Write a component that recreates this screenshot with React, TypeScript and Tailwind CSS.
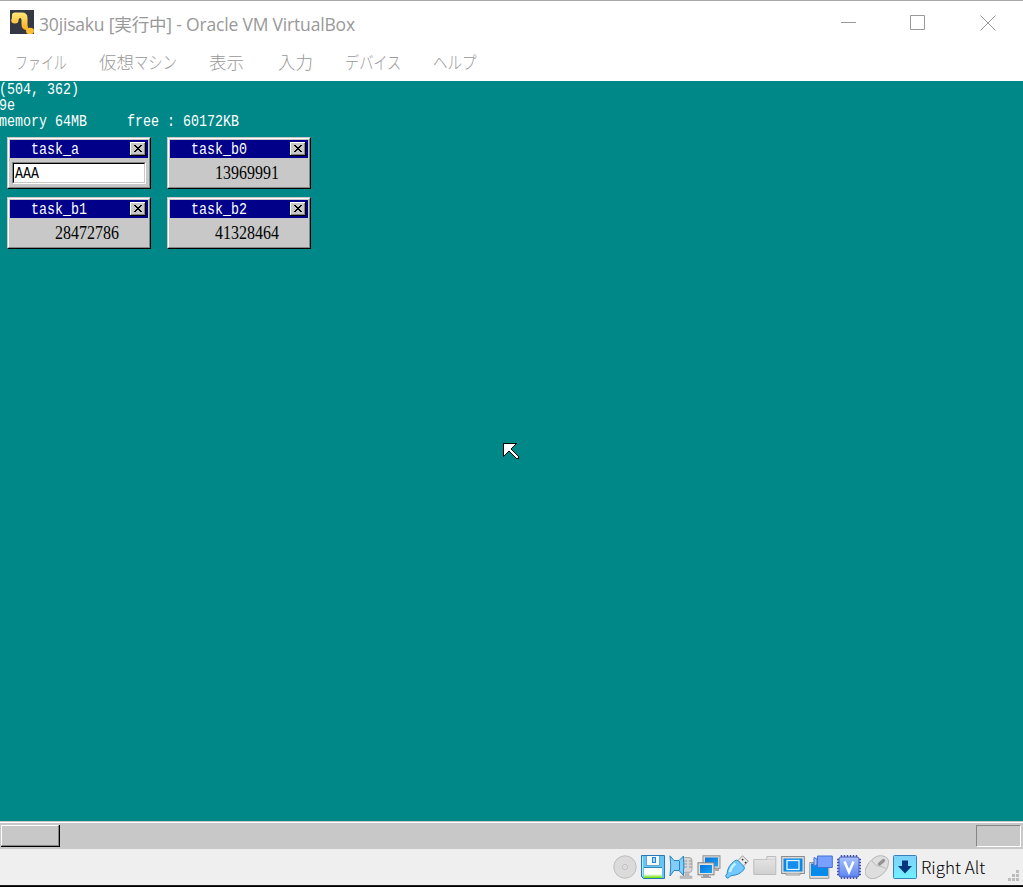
import type { ReactNode } from "react";

const CURSOR = [
  "**************..",
  "*OOOOOOOOOOO*...",
  "*OOOOOOOOOO*....",
  "*OOOOOOOOO*.....",
  "*OOOOOOOO*......",
  "*OOOOOOO*.......",
  "*OOOOOOO*.......",
  "*OOOOOOOO*......",
  "*OOOO**OOO*.....",
  "*OOO*..*OOO*....",
  "*OO*....*OOO*...",
  "*O*......*OOO*..",
  "**........*OOO*.",
  "*..........*OOO*",
  "............*OO*",
  ".............***",
];

const CLOSE = [
  "OOOOOOOOOOOOOOO*",
  "OQQQQQQQQQQQQQ$*",
  "OQQQQQQQQQQQQQ$*",
  "OQQQ**QQQQ**QQ$*",
  "OQQQQ**QQ**QQQ$*",
  "OQQQQQ****QQQQ$*",
  "OQQQQQQ**QQQQQ$*",
  "OQQQQQ****QQQQ$*",
  "OQQQQ**QQ**QQQ$*",
  "OQQQ**QQQQ**QQ$*",
  "OQQQQQQQQQQQQQ$*",
  "OQQQQQQQQQQQQQ$*",
  "O$$$$$$$$$$$$$$*",
  "****************",
];

const PALETTE: Record<string, string> = {
  "*": "#000000",
  O: "#ffffff",
  Q: "#c8c8c8",
  $: "#868686",
};

function Sprite({ rows }: { rows: string[] }) {
  return (
    <svg width={rows[0].length} height={rows.length} shapeRendering="crispEdges" className="block">
      {rows.flatMap((row, y) =>
        [...row].map((c, x) =>
          c === "." ? null : <rect key={`${x}-${y}`} x={x} y={y} width="1" height="1" fill={PALETTE[c]} />,
        ),
      )}
    </svg>
  );
}

/* Console text: 8x16 character cells */
function Cells({ children }: { children: ReactNode }) {
  return (
    <span className="block h-4 translate-y-px scale-y-[1.3] whitespace-pre font-['Liberation_Mono',monospace] text-[13.33px] leading-4">
      {children}
    </span>
  );
}

function TaskWindow({ title, place, children }: { title: string; place: string; children: ReactNode }) {
  return (
    <section className={`absolute h-[52px] w-36 border border-t-[#c8c8c8] border-r-black border-b-black border-l-[#c8c8c8] ${place}`}>
      <div className="h-full border border-t-white border-r-[#868686] border-b-[#868686] border-l-white bg-[#c8c8c8] p-px">
        <header className="flex h-[18px] items-start justify-between bg-[#000088] pt-px pr-0.5 pl-[21px] text-white">
          <Cells>{title}</Cells>
          <div className="pt-px">
            <Sprite rows={CLOSE} />
          </div>
        </header>
        {children}
      </div>
    </section>
  );
}

/* Digits of the serif face are exactly one 8px cell wide at 16px */
function Counter({ children }: { children: ReactNode }) {
  return (
    <div className="pt-[7px] pl-[45px] text-black">
      <span className="block h-4 scale-y-[1.12] font-['Liberation_Serif',serif] text-base leading-4">
        {children}
      </span>
    </div>
  );
}

function Icon({ children }: { children: ReactNode }) {
  return (
    <svg width="24" height="24" viewBox="0 0 24 24" className="block shrink-0">
      {children}
    </svg>
  );
}

function StatusIcons() {
  return (
    <>
      <svg width="0" height="0" className="absolute">
        <defs>
          <linearGradient id="blue" x1="0" y1="0" x2="1" y2="1">
            <stop offset="0" stopColor="#0a72d8" />
            <stop offset="1" stopColor="#16a5f8" />
          </linearGradient>
          <linearGradient id="sky" x1="0" y1="0" x2="0" y2="1">
            <stop offset="0" stopColor="#7fd0fb" />
            <stop offset="1" stopColor="#6ff0ff" />
          </linearGradient>
          <linearGradient id="violet" x1="0" y1="0" x2="0" y2="1">
            <stop offset="0" stopColor="#a9c2ff" />
            <stop offset="1" stopColor="#5b86f2" />
          </linearGradient>
          <linearGradient id="grey" x1="0" y1="0" x2="0" y2="1">
            <stop offset="0" stopColor="#e6e6e6" />
            <stop offset="1" stopColor="#d0d0d0" />
          </linearGradient>
          <linearGradient id="label" x1="0" y1="0" x2="0" y2="1">
            <stop offset="0.6" stopColor="#ffffff" />
            <stop offset="1" stopColor="#62e000" />
          </linearGradient>
        </defs>
      </svg>
      <Icon>
        <circle cx="12" cy="12" r="11.2" fill="#dbdbdb" stroke="#bdbdbd" />
        <circle cx="12" cy="12" r="2.5" fill="#e9e9e9" stroke="#bcbcbc" />
        <circle cx="12" cy="12" r="0.8" fill="#c4c4c4" />
      </Icon>
      <Icon>
        <path d="M.5.5h23v23H2.5l-2-2z" fill="#62c6f7" stroke="#2878b8" />
        <path d="M1.5 1.5v19.500" stroke="#b5ebff" />
        <path d="M5 1h14v9H5z" fill="#f4f8fb" />
        <path d="M5.500 1v9.500h13V1" fill="none" stroke="#68a5c9" />
        <rect x="11.500" y="2.500" width="3" height="5" fill="#9cdcff" stroke="#2580d8" />
        <path d="M3 13h18v10H3z" fill="url(#label)" />
        <path d="M3 12.500h18" stroke="#3484b0" />
      </Icon>
      <Icon>
        <rect x="12.500" y="2.500" width="10.500" height="15" rx="3" fill="#d6d6d6" stroke="#aaa" />
        <path d="M15 6h3M20 6h3M15 9h3M20 9h3M15 12h3M20 12h3" stroke="#999" strokeWidth="1" />
        <path d="M16 17h4v4h3v2.500h-12V21h5z" fill="#bbb" stroke="#aaa" strokeWidth=".5" />
        <path d="M1 .8 5 5.500h5L14.500 1v19.500L10 15.500H5L1 21Q2.500 11 1 .8z" fill="#83cdfc" stroke="#2684c7" />
        <path d="M10.500 6v9.500" stroke="#2684c7" />
        <path d="M14.500 7h1v7h-1z" fill="#4aabe8" />
      </Icon>
      <Icon>
        <rect x="6" y=".8" width="17" height="12.500" fill="#d8d8d8" stroke="#909090" />
        <rect x="8" y="2.500" width="13" height="9" fill="url(#blue)" />
        <path d="M18 14h4v2h-4z" fill="#aaa" />
        <rect x="1" y="7.800" width="16" height="12" fill="#e3e3e3" stroke="#808080" />
        <rect x="3" y="10" width="12" height="8" fill="url(#blue)" />
        <path d="M6 20h6v1.500h2V23H4v-1.500h2z" fill="#a0a0a0" />
      </Icon>
      <Icon>
        <path d="M13 5.500 17.500.8 23.300 6.300 18 11.500z" fill="#ececec" stroke="#999" />
        <path d="m17 4 1.200 1.200M20 7l1.200 1.200" stroke="#333" strokeWidth="1.600" />
        <path d="M9.500 6q2-1.800 4 0l5 5q2 2 0 4-4 5-11.500 5.500-2 .5-3 2-2 1.500-3-.5-1-2 1-3Q2.500 11 9.500 6z" fill="#73c9ff" stroke="#278ac8" />
        <path d="M10.500 8.500Q6 11.500 5 17" stroke="#c5f2ff" strokeWidth="2.500" fill="none" />
      </Icon>
      <Icon>
        <path d="M.8 19.500V4.500h13v-3h9v18z" fill="url(#grey)" stroke="#bcbcbc" />
        <path d="M1 4.500h22" stroke="#c8c8c8" strokeWidth=".6" />
      </Icon>
      <Icon>
        <rect x=".6" y="1.500" width="22.800" height="17" fill="#d9d9d9" stroke="#8d8d8d" />
        <rect x="2.500" y="3.500" width="19" height="13" fill="#078bea" />
        <rect x="6" y="5.500" width="12" height="9" fill="#158ded" stroke="#e4f4ff" strokeWidth="1.300" />
        <path d="M5 18.500V20h14v-1.500" fill="#ddd" stroke="#8d8d8d" strokeWidth=".8" />
      </Icon>
      <Icon>
        <path d="M.8 7.500h19v15.800H.8z" fill="#e2e2e2" stroke="#949494" />
        <path d="M2 8.500h17v12.500H2z" fill="#078bea" />
        <path d="M8.500 1h14.800v11.500H8.500z" fill="#79a0ff" stroke="#4370d8" />
        <path d="m8 4-3-1.500v9L8 9.500z" fill="#a9c1ff" stroke="#4370d8" />
      </Icon>
      <Icon>
        <path d="M4.500 0v24M7.500 0v24M10.500 0v24M13.500 0v24M16.500 0v24M19.500 0v24M0 4.500h24M0 7.500h24M0 10.500h24M0 13.500h24M0 16.500h24M0 19.500h24" stroke="#3f4da8" strokeWidth="1.400" />
        <rect x="2" y="2" width="20" height="20" rx="2" fill="url(#violet)" stroke="#465dbd" />
        <path d="M7.500 6.500 12 17 16.500 6.500" fill="none" stroke="white" strokeWidth="2.500" />
      </Icon>
      <Icon>
        <path d="M7 4.500q6-5 11-3.500 6 1.500 5.500 6.500-.5 8.500-8.500 13.500-8 5-13 .5-4-4 0-10.500 2-4 5-6.500z" fill="#dedede" stroke="#b5b5b5" />
        <path d="M6.500 5q3 6 9.500 6.500 4 .5 5.500 3" fill="none" stroke="#bbb" />
        <path d="m14.500 9 4-3.500" stroke="#939393" strokeWidth="3.300" strokeLinecap="round" />
      </Icon>
      <Icon>
        <rect x=".5" y=".5" width="23" height="23" rx="1" fill="url(#sky)" stroke="#3880bc" />
        <path d="M9 5.500h6V11h4l-7 7.500L5 11h4z" fill="#07347b" />
      </Icon>
    </>
  );
}

function Titlebar() {
  return (
    <header className="flex h-[45px] shrink-0 items-center border-t border-[#a9a9a9] text-[#999]">
      <svg width="24" height="24" viewBox="0 0 24 24" className="mt-[-2px] ml-2.5 block">
        <defs>
          <linearGradient id="gold" x1="0" y1="0" x2="0" y2="1">
            <stop offset="0" stopColor="#ffe779" />
            <stop offset="1" stopColor="#ffad19" />
          </linearGradient>
        </defs>
        <path d="M0 0h24v24H0z" fill="#343744" />
        <path d="M2 5Q2 2.500 5 2.500h7q5.500 0 5.500 5.500v6.500q0 3 1.500 5.500-7.500 1-7.500-6V10q0-2-1.500-2t-1.500 2.500Q8.500 13.500 5 13.500 1 13.500 1.200 10 2.200 8 2 5z" fill="url(#gold)" />
        <ellipse cx="20" cy="21" rx="4" ry="3.300" fill="#ffbf33" />
      </svg>
      <h1 className="ml-[5px] w-[780px] whitespace-pre pt-px font-['Open_Sans','Noto_Sans_CJK_JP',sans-serif] text-[17.500px] leading-6 font-normal tracking-[-0.18px]">
        30jisaku [実行中] - Oracle VM VirtualBox
      </h1>
      <svg width="204" height="44" className="block" fill="none" stroke="#999">
        <path d="M22 21.500h15M91.500 14.500h14v14h-14zM161.500 14.500l15 15M176.500 14.500l-15 15" />
      </svg>
    </header>
  );
}

function Menu() {
  return (
    <nav className="flex h-9 shrink-0 items-center whitespace-nowrap pb-0.5 pl-[15px] font-['Noto_Sans_CJK_JP',sans-serif] text-[17.500px] leading-[34px] font-light text-[#999]">
      <div className="w-[84px]"><span className="inline-block origin-left scale-x-[0.74]">ファイル</span></div>
      <div className="flex w-[110px]"><span>仮想</span><span className="origin-left scale-x-[0.82]">マシン</span></div>
      <div className="w-[69px]">表示</div>
      <div className="w-[67px]">入力</div>
      <div className="w-[88px]"><span className="inline-block origin-left scale-x-[0.81]">デバイス</span></div>
      <div><span className="inline-block origin-left scale-x-[0.83]">ヘルプ</span></div>
    </nav>
  );
}

export default function App() {
  return (
    <div className="flex h-[887px] w-[1023px] flex-col overflow-hidden bg-white">
      <Titlebar />
      <Menu />
      <main className="relative flex h-[768px] shrink-0 flex-col bg-[#008888]">
        <div className="-ml-px grow text-white">
          <Cells>(504, 362)</Cells>
          <Cells>9e</Cells>
          <Cells>{"memory 64MB     free : 60172KB"}</Cells>
        </div>

        <TaskWindow title="task_a" place="top-14 left-[7px]">
          <div className="mx-0.5 mt-1 h-[22px] border border-t-[#868686] border-r-white border-b-white border-l-[#868686]">
            <div className="h-full border border-t-black border-r-[#c8c8c8] border-b-[#c8c8c8] border-l-black bg-white pt-px pl-px text-black">
              <Cells>AAA</Cells>
            </div>
          </div>
        </TaskWindow>
        <TaskWindow title="task_b0" place="top-14 left-[167px]">
          <Counter>13969991</Counter>
        </TaskWindow>
        <TaskWindow title="task_b1" place="top-[116px] left-[7px]">
          <Counter>28472786</Counter>
        </TaskWindow>
        <TaskWindow title="task_b2" place="top-[116px] left-[167px]">
          <Counter>41328464</Counter>
        </TaskWindow>
        <div className="absolute top-[362px] left-[503px]">
          <Sprite rows={CURSOR} />
        </div>

        <div className="h-7 shrink-0 border-t border-[#c8c8c8] bg-[#c8c8c8]">
          <div className="flex h-full items-start justify-between border-t border-white pt-0.5 pr-0.5 pl-px">
            <div className="h-[22px] w-[59px] border-r border-b border-black">
              <div className="h-full border border-t-white border-r-[#868686] border-b-[#868686] border-l-white" />
            </div>
            <div className="h-[22px] w-[45px] border border-t-[#868686] border-r-white border-b-white border-l-[#868686]" />
          </div>
        </div>
      </main>
      <footer className="flex h-9 shrink-0 items-center gap-1 bg-[#efefef] pl-[613px]">
        <StatusIcons />
        <span className="w-[83px] whitespace-nowrap font-['Noto_Sans_CJK_JP',sans-serif] text-[17px] leading-9 font-light text-black">
          Right Alt
        </span>
        <svg width="12" height="12" className="mt-[18px] block shrink-0" fill="#bcbcbc">
          <path d="M8 0h3v3H8zM4 4h3v3H4zM8 4h3v3H8zM0 8h3v3H0zM4 8h3v3H4zM8 8h3v3H8z" />
        </svg>
      </footer>
      <div className="h-0.5 shrink-0 border-t border-[#202020] bg-black" />
    </div>
  );
}
